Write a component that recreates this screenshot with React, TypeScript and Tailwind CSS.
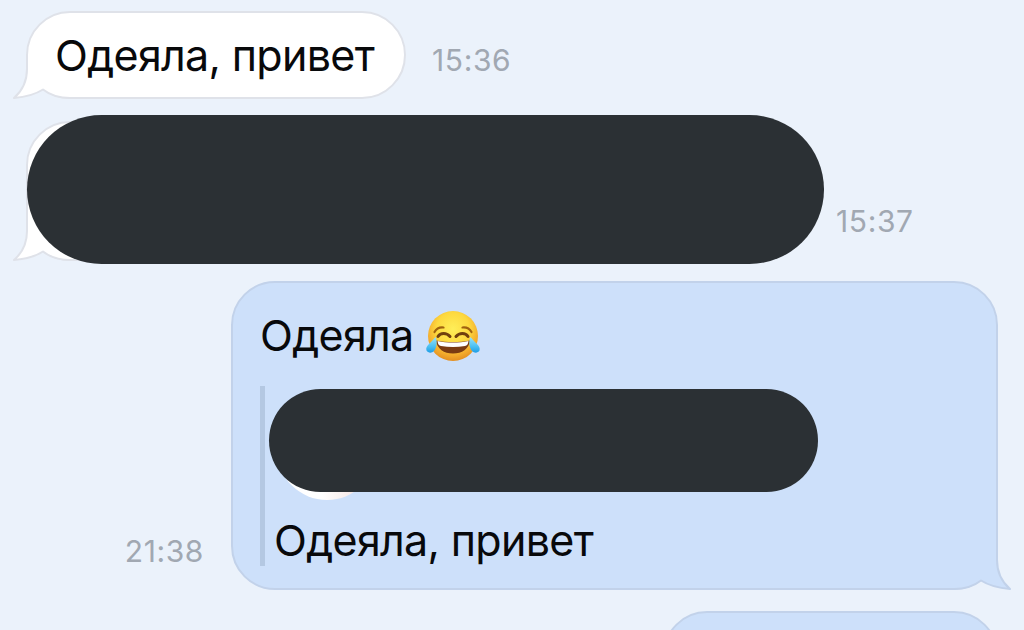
import type { ReactNode } from "react";

function Tail({ className, fill, stroke }: { className: string; fill: string; stroke: string }) {
  return (
    <svg className={`absolute -bottom-[2px] ${className}`} width="60" height="50" viewBox="0 0 60 50" fill="none">
      <path
        d="M15 6V20C15 32 10 42 2 49C14 48 24 45 31 40.500C38 46 47 49 58 49"
        fill={fill}
        stroke={stroke}
        strokeWidth="2"
        strokeLinejoin="round"
      />
      <path d="M16 6V22L30 38L58 48V6Z" fill={fill} />
    </svg>
  );
}

function JoyEmoji() {
  return (
    <svg className="relative top-px shrink-0" width="56" height="52" viewBox="0 0 56 52" role="img" aria-label="😂">
      <defs>
        <radialGradient id="face" cx="50%" cy="36%" r="66%">
          <stop offset="0" stopColor="#ffee58" />
          <stop offset="0.5" stopColor="#fdd93f" />
          <stop offset="0.8" stopColor="#f3aa2c" />
          <stop offset="1" stopColor="#e08a20" />
        </radialGradient>
        <linearGradient id="tear" x1="0" y1="0" x2="0" y2="1">
          <stop offset="0" stopColor="#9be3fa" />
          <stop offset="0.6" stopColor="#4cc0f2" />
          <stop offset="1" stopColor="#1f9ee6" />
        </linearGradient>
      </defs>
      <circle cx="28" cy="26" r="25" fill="url(#face)" />
      <path d="M9.500 22C11.500 18.500 14.500 17 18.500 17.500" stroke="#a0620f" strokeWidth="2.200" strokeLinecap="round" fill="none" />
      <path d="M46.500 22C44.500 18.500 41.500 17 37.500 17.500" stroke="#a0620f" strokeWidth="2.200" strokeLinecap="round" fill="none" />
      <path d="M13 26.500C15.500 22.500 21.500 22.500 25 26.500" stroke="#70400e" strokeWidth="3" strokeLinecap="round" fill="none" />
      <path d="M43 26.500C40.500 22.500 34.500 22.500 31 26.500" stroke="#70400e" strokeWidth="3" strokeLinecap="round" fill="none" />
      <path d="M11 30.500C22 32.500 34 32.500 45 30.500C44 39 37 43.500 28 43.500C19 43.500 12 39 11 30.500Z" fill="#7a3b12" />
      <path d="M12.500 31C22 33 34 33 43.500 31C43 34.500 42 35.500 40 36C32 37.300 24 37.300 16 36C14 35.500 13 34.500 12.500 31Z" fill="#fff" />
      <path d="M10.500 27C12.500 31.500 12 37 9 41C6.500 43.500 3 43 1.500 40.500C0 36 6 33 10.500 27Z" fill="url(#tear)" />
      <path d="M45.500 27C43.500 31.500 44 37 47 41C49.500 43.500 53 43 54.500 40.500C56 36 50 33 45.500 27Z" fill="url(#tear)" />
    </svg>
  );
}

function Time({ children }: { children: ReactNode }) {
  return <time className="block text-[30px] leading-[36px] tracking-[0.6px] text-[#a1a8b2]">{children}</time>;
}

export default function App() {
  return (
    <main className="flex h-[630px] w-[1024px] flex-col overflow-hidden bg-[#ebf2fb] pt-[11px] font-['Inter','Liberation_Sans',sans-serif] text-[43px] tracking-[-0.68px] text-[#08090b]">
      <div className="flex h-[88px] shrink-0 pl-[26px]">
        <div className="relative flex w-[380px] items-center rounded-[44px] border-2 border-[#dfe2e9] bg-white pl-[27px]">
          <Tail className="-left-[16px]" fill="#fff" stroke="#dfe2e9" />
          <p className="relative whitespace-nowrap leading-[60px]">Одеяла, привет</p>
        </div>
        <div className="pt-[31px] pl-[26px]">
          <Time>15:36</Time>
        </div>
      </div>

      {/* hidden message */}
      <div className="mt-4 flex h-[149px] shrink-0 pl-[26px]">
        <div className="relative w-[798px]">
          <div className="absolute top-[6px] left-0 h-[140px] w-[700px] rounded-[44px] border-2 border-[#dfe2e9] bg-white">
            <Tail className="-left-[16px]" fill="#fff" stroke="#dfe2e9" />
          </div>
          <div className="relative ml-px h-[149px] rounded-full bg-[#2b3034]" />
        </div>
        <div className="pt-[88px] pl-[12px]">
          <Time>15:37</Time>
        </div>
      </div>

      <div className="mt-[17px] flex h-[309px] shrink-0 justify-end pr-[26px]">
        <div className="flex items-end pr-[27px] pb-[21px]">
          <Time>21:38</Time>
        </div>
        <div className="relative w-[767px] rounded-[44px] border-2 border-[#c2d2ea] bg-[#cde0fa] pt-[22px] pl-[27px]">
          <Tail className="-right-[16px] -scale-x-100" fill="#cde0fa" stroke="#c2d2ea" />
          <div className="flex h-[60px] items-center gap-[11px]">
            <p className="leading-[60px]">Одеяла</p>
            <JoyEmoji />
          </div>
          <blockquote className="mt-[21px] h-[180px] border-l-[5px] border-[#b4c8e2] pt-[3px] pl-[4px]">
            <div className="relative h-[103px] w-[549px]">
              <div className="absolute top-[11px] left-[8px] size-[100px] rounded-full bg-linear-to-r from-white from-45% to-[#f3e2e0] to-85%" />
              <div className="relative h-[103px] rounded-full bg-[#2b3034]" />
            </div>
            <p className="mt-[18px] pl-[5px] leading-[60px]">Одеяла, привет</p>
          </blockquote>
        </div>
      </div>

      <div className="mt-[21px] flex shrink-0 justify-end pr-[26px]">
        <div className="h-[88px] w-[335px] rounded-[44px] border-2 border-[#c2d2ea] bg-[#cde0fa]" />
      </div>
    </main>
  );
}
